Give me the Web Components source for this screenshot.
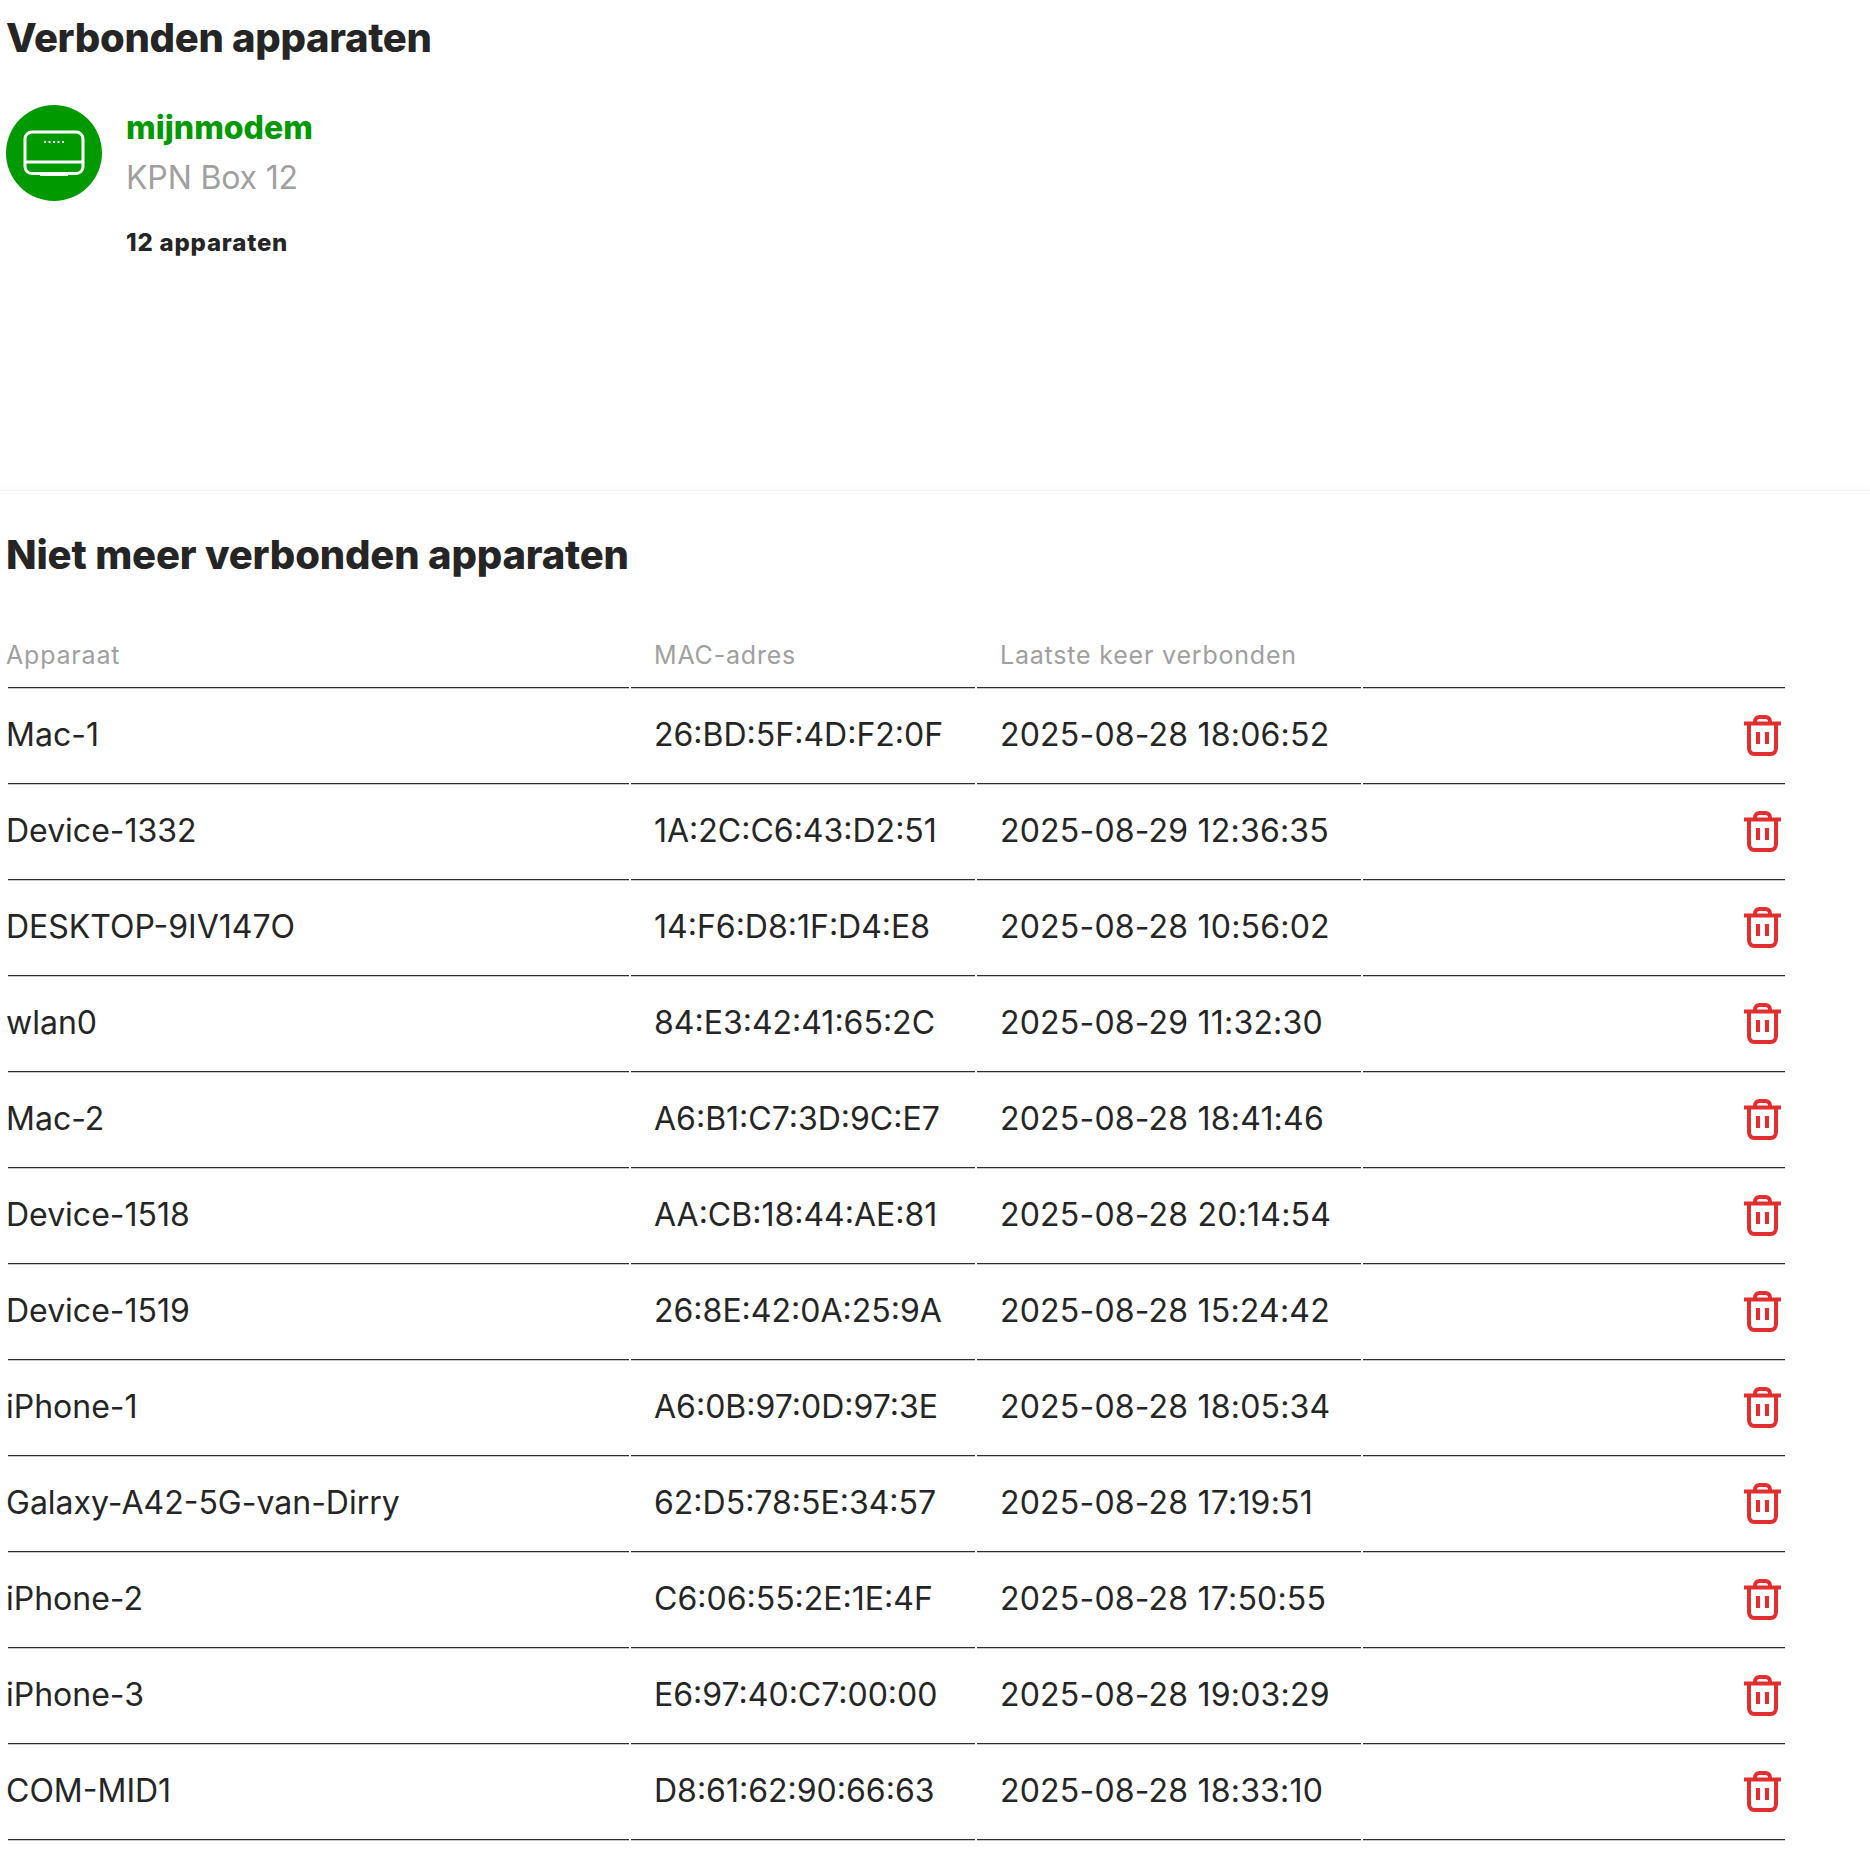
<!DOCTYPE html>
<html lang="nl">
<head>
<meta charset="utf-8">
<title>Verbonden apparaten</title>
<style>
  html, body { margin: 0; background: #fff; }
  body { font-family: "Inter", "Liberation Sans", sans-serif; color: #252525; }
</style>
</head>
<body>
<connected-devices></connected-devices>
<disconnected-devices></disconnected-devices>

<script>
class ConnectedDevices extends HTMLElement {
  constructor() {
    super();
    this.attachShadow({ mode: 'open' });
    this.shadowRoot.innerHTML = `
    <style>
      :host { display: block; height: 490px; padding-left: 6px; box-sizing: border-box; }
      h2 {
        margin: 0; padding-top: 15px; height: 105px; box-sizing: border-box;
        font: 800 40px/46px "Inter", sans-serif; color: #252525; letter-spacing: -.3px;
      }
      .modem { display: flex; gap: 24px; }
      .icon {
        width: 96px; height: 96px; border-radius: 50%; background: #009900;
        display: flex; align-items: center; justify-content: center; flex: none;
      }
      .name { font: 800 32px/40px "Inter", sans-serif; color: #009900; margin-top: 3px; }
      .type { font: 400 32px/40px "Inter", sans-serif; color: #a0a0a0; margin-top: 10px; letter-spacing: -.15px; }
      .count { font: 800 24px/30px "Inter", sans-serif; color: #252525; margin-top: 30px; letter-spacing: .8px; }
    </style>
    <h2>Verbonden apparaten</h2>
    <div class="modem">
      <div class="icon">
        <svg width="62" height="46" viewBox="0 0 62 46" fill="none" stroke="#fff" stroke-width="3">
          <rect x="2" y="2" width="58" height="41.500" rx="7"/>
          <path d="M2 32H60"/>
          <path d="M17 45.200H45" stroke-width="1.500"/>
          <path d="M21 12H41" stroke-width="2" stroke-dasharray="2 2.500"/>
        </svg>
      </div>
      <div>
        <div class="name">mijnmodem</div>
        <div class="type">KPN Box 12</div>
        <div class="count">12 apparaten</div>
      </div>
    </div>`;
  }
}

class DeviceRow extends HTMLElement {
  constructor() {
    super();
    this.attachShadow({ mode: 'open' });
    this.shadowRoot.innerHTML = `
    <style>
      :host {
        display: grid; grid-template-columns: 621px 344px 384px 422px; column-gap: 2px;
        height: 96px; margin-left: 2px;
      }
      .cell {
        border-bottom: 1px solid #2f2f2f; box-shadow: 0 1px 0 #c8c8c8; box-sizing: border-box;
        height: 95px;
        display: flex; align-items: center; padding: 0 0 2px 23px;
        font: 400 32px/40px "Inter", sans-serif; color: #252525; letter-spacing: 0;
        white-space: nowrap;
      }
      .name { padding-left: 0; letter-spacing: 0; }
      .name ::slotted(span) { margin-left: -2px; }
      .seen { letter-spacing: .2px; }
      .action { justify-content: flex-end; padding-right: 4px; }
      svg { display: block; }
    </style>
    <div class="cell name"><slot name="name"></slot></div>
    <div class="cell"><slot name="mac"></slot></div>
    <div class="cell seen"><slot name="seen"></slot></div>
    <div class="cell action">
      <svg width="37" height="41" viewBox="0 0 37 41" fill="none" stroke="#e22e2e" stroke-width="4">
        <path d="M0 8.500H37"/>
        <path d="M11 8V6.500C11 3.500 13 2 15.500 2H21.500C24 2 26 3.500 26 6.500V8"/>
        <path d="M5 8.500V33C5 36.500 7 39 10.500 39H26.500C30 39 32 36.500 32 33V8.500"/>
        <path d="M14 17V29M23 17V29"/>
      </svg>
    </div>`;
  }
}

class DisconnectedDevices extends HTMLElement {
  constructor() {
    super();
    this.attachShadow({ mode: 'open' });
    this.shadowRoot.innerHTML = `
    <style>
      :host {
        display: block; padding-left: 6px; border-top: 1px solid #f2f2f2;
        box-shadow: 0 -3px 4px rgba(0,0,0,.02);
      }
      h2 { margin: 0; padding-top: 41px; height: 123px; box-sizing: border-box;
        font: 800 40px/46px "Inter", sans-serif; color: #252525; letter-spacing: -.17px; }
      .head {
        display: grid; grid-template-columns: 621px 344px 384px 422px; column-gap: 2px;
        height: 75px; margin-left: 2px;
      }
      .head div {
        border-bottom: 1px solid #2f2f2f; box-shadow: 0 1px 0 #c8c8c8; box-sizing: border-box;
        height: 74px; padding-left: 23px; padding-top: 26px;
        font: 400 25px/30px "Inter", sans-serif; color: #a0a0a0; letter-spacing: .8px;
      }
      .head div:first-child { padding-left: 0; text-indent: -2px; }
      .list { display: block; }
    </style>
    <h2>Niet meer verbonden apparaten</h2>
    <div class="head"><div>Apparaat</div><div>MAC-adres</div><div>Laatste keer verbonden</div><div></div></div>
    <div class="list"></div>`;

    const devices = [
      ['Mac-1', '26:BD:5F:4D:F2:0F', '2025-08-28 18:06:52'],
      ['Device-1332', '1A:2C:C6:43:D2:51', '2025-08-29 12:36:35'],
      ['DESKTOP-9IV147O', '14:F6:D8:1F:D4:E8', '2025-08-28 10:56:02'],
      ['wlan0', '84:E3:42:41:65:2C', '2025-08-29 11:32:30'],
      ['Mac-2', 'A6:B1:C7:3D:9C:E7', '2025-08-28 18:41:46'],
      ['Device-1518', 'AA:CB:18:44:AE:81', '2025-08-28 20:14:54'],
      ['Device-1519', '26:8E:42:0A:25:9A', '2025-08-28 15:24:42'],
      ['iPhone-1', 'A6:0B:97:0D:97:3E', '2025-08-28 18:05:34'],
      ['Galaxy-A42-5G-van-Dirry', '62:D5:78:5E:34:57', '2025-08-28 17:19:51'],
      ['iPhone-2', 'C6:06:55:2E:1E:4F', '2025-08-28 17:50:55'],
      ['iPhone-3', 'E6:97:40:C7:00:00', '2025-08-28 19:03:29'],
      ['COM-MID1', 'D8:61:62:90:66:63', '2025-08-28 18:33:10'],
    ];
    const list = this.shadowRoot.querySelector('.list');
    devices.forEach(([name, mac, seen]) => {
      const row = document.createElement('device-row');
      row.innerHTML = `<span slot="name">${name}</span><span slot="mac">${mac}</span><span slot="seen">${seen}</span>`;
      list.appendChild(row);
    });
  }
}

customElements.define('connected-devices', ConnectedDevices);
customElements.define('device-row', DeviceRow);
customElements.define('disconnected-devices', DisconnectedDevices);
</script>
</body>
</html>
